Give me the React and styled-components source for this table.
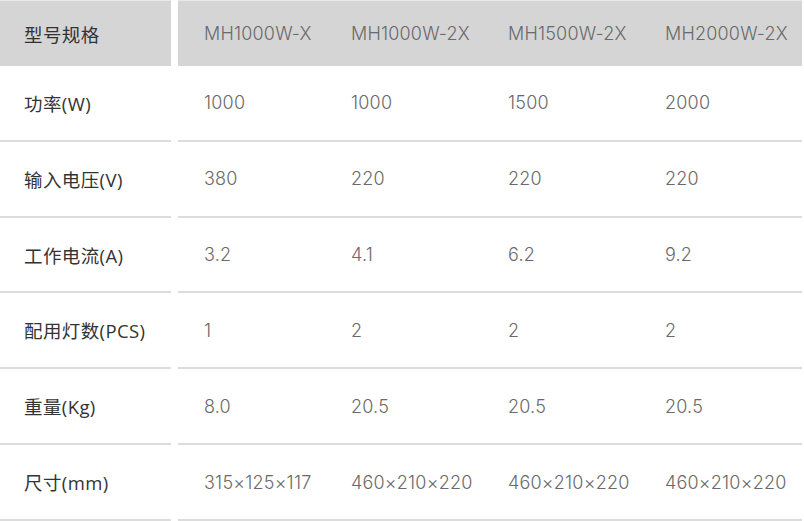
import React from "react";
import styled, { createGlobalStyle } from "styled-components";

const Global = createGlobalStyle`
  html, body { margin: 0; padding: 0; background: #fff; }
  body { font-family: Inter, "Noto Sans CJK SC", sans-serif; }
`;

const Table = styled.div`
  width: 802px;
  display: flex;
  flex-direction: column;
`;

const Row = styled.div`
  display: grid;
  grid-template-columns: 171px 1fr;
  column-gap: 7px;
  height: ${(p) => (p.$head ? "66px" : "75.83px")};
`;

const LabelCell = styled.div`
  box-sizing: border-box;
  display: flex;
  align-items: center;
  padding-left: 24px;
  font-family: "Open Sans", "Noto Sans CJK SC", sans-serif;
  font-size: 18.5px;
  letter-spacing: 0.4px;
  color: #333;
  background: ${(p) => (p.$head ? "#d5d5d5" : "#fff")};
  border-top: ${(p) => (p.$head ? "1px solid #e8e8e8" : "none")};
  border-bottom: ${(p) => (p.$head ? "none" : "2px solid #dcdcdc")};
`;

const Values = styled.div`
  box-sizing: border-box;
  display: grid;
  grid-template-columns: 147px 157px 157px 1fr;
  background: ${(p) => (p.$head ? "#d5d5d5" : "#fff")};
  border-top: ${(p) => (p.$head ? "1px solid #e8e8e8" : "none")};
  border-bottom: ${(p) => (p.$head ? "none" : "2px solid #dcdcdc")};
`;

const ValueCell = styled.div`
  display: flex;
  align-items: center;
  padding-left: 26px;
  font-family: Inter, "Noto Sans CJK SC", sans-serif;
  font-weight: 300;
  font-size: 18px;
  letter-spacing: 0.2px;
  color: #6a6a6a;
  white-space: nowrap;
`;

const head = ["MH1000W-X", "MH1000W-2X", "MH1500W-2X", "MH2000W-2X"];
const rows = [
  ["功率(W)", ["1000", "1000", "1500", "2000"]],
  ["输入电压(V)", ["380", "220", "220", "220"]],
  ["工作电流(A)", ["3.2", "4.1", "6.2", "9.2"]],
  ["配用灯数(PCS)", ["1", "2", "2", "2"]],
  ["重量(Kg)", ["8.0", "20.5", "20.5", "20.5"]],
  ["尺寸(mm)", ["315×125×117", "460×210×220", "460×210×220", "460×210×220"]],
];

export default function App() {
  return (
    <>
      <Global />
      <Table>
        <Row $head>
          <LabelCell $head>型号规格</LabelCell>
          <Values $head>
            {head.map((h) => (
              <ValueCell key={h}>{h}</ValueCell>
            ))}
          </Values>
        </Row>
        {rows.map(([label, vals]) => (
          <Row key={label}>
            <LabelCell>{label}</LabelCell>
            <Values>
              {vals.map((v, i) => (
                <ValueCell key={i}>{v}</ValueCell>
              ))}
            </Values>
          </Row>
        ))}
      </Table>
    </>
  );
}
